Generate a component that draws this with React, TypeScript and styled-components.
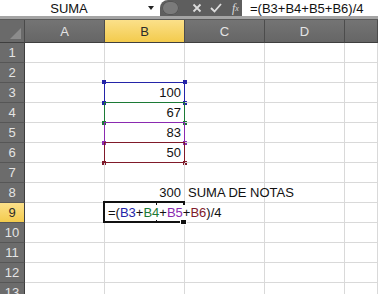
import React from 'react';
import styled, { createGlobalStyle } from 'styled-components';

const GlobalStyle = createGlobalStyle`
  html, body {
    margin: 0;
    padding: 0;
    background: #ffffff;
    overflow: hidden;
  }
  body {
    font-family: 'Liberation Sans', Arial, sans-serif;
  }
`;

const Window = styled.div`
  width: 378px;
  height: 294px;
  overflow: hidden;
  background: #ffffff;
  display: flex;
  flex-direction: column;
  & > * {
    flex-shrink: 0;
  }
`;

const FormulaBar = styled.div`
  height: 16px;
  display: flex;
  align-items: stretch;
  background: #ffffff;
`;

const NameBox = styled.div`
  width: 160px;
  position: relative;
  display: flex;
  align-items: center;
  justify-content: center;
  padding-right: 22px;
  box-sizing: border-box;
  font-size: 13px;
  color: #111;
`;

const DropArrow = styled.span`
  position: absolute;
  right: 6px;
  top: 6px;
  width: 0;
  height: 0;
  border-left: 3px solid transparent;
  border-right: 3px solid transparent;
  border-top: 4px solid #222;
`;

const ButtonStrip = styled.div`
  width: 82px;
  background: #5e5e5e;
  display: flex;
  align-items: center;
  gap: 6px;
  padding-left: 2px;
  box-sizing: border-box;
  border-radius: 8px 0 0 0;
`;

const Grip = styled.div`
  width: 18px;
  height: 14px;
  border-radius: 7px;
  background: #7a7a7a;
  box-shadow: inset 0 0 0 1px #555;
  margin-right: 6px;
`;

const IconSlot = styled.div`
  width: 14px;
  height: 14px;
  display: flex;
  align-items: center;
  justify-content: center;
  color: #dcdcdc;
  font-family: 'Liberation Serif', serif;
  font-style: italic;
  font-size: 12px;
`;

const FormulaInput = styled.div`
  flex: 1;
  display: flex;
  align-items: center;
  padding-left: 8px;
  font-size: 13px;
  color: #111;
  white-space: nowrap;
`;

const Band = styled.div`
  height: 3px;
  background: #a4a4a4;
  border-bottom: 1px solid #5a5a5a;
`;

const Sheet = styled.div`
  display: grid;
  grid-template-columns: 25px repeat(4, 80px) 1fr;
  grid-template-rows: 23px repeat(13, 20px);
  font-size: 13px;
`;

const Corner = styled.div`
  background: #6a6a6a;
  border-right: 1px solid #4a4a4a;
  border-bottom: 1px solid #3e3e3e;
  position: relative;
  box-sizing: border-box;
  &::after {
    content: '';
    position: absolute;
    right: 3px;
    bottom: 3px;
    width: 0;
    height: 0;
    border-left: 11px solid transparent;
    border-bottom: 11px solid #8c8c8c;
  }
`;

const ColHead = styled.div<{ $active?: boolean }>`
  background: ${(p) => (p.$active ? 'linear-gradient(#fbe08a, #f3cb4d)' : 'linear-gradient(#747474, #666666)')};
  color: ${(p) => (p.$active ? '#2b2b2b' : '#e4e4e4')};
  border-right: 1px solid #4c4c4c;
  border-bottom: 1px solid #3e3e3e;
  box-sizing: border-box;
  display: flex;
  align-items: center;
  justify-content: center;
`;

const RowHead = styled.div<{ $active?: boolean }>`
  background: ${(p) => (p.$active ? 'linear-gradient(#fbe08a, #f3cb4d)' : '#6c6c6c')};
  color: ${(p) => (p.$active ? '#2b2b2b' : '#e4e4e4')};
  border-right: 1px solid #3e3e3e;
  border-bottom: 1px solid #565656;
  box-sizing: border-box;
  display: flex;
  align-items: center;
  justify-content: center;
`;

const Cell = styled.div<{ $align?: 'left' | 'right'; $raised?: boolean }>`
  position: relative;
  border-right: 1px solid #d9d9d9;
  border-bottom: 1px solid #d9d9d9;
  box-sizing: border-box;
  display: flex;
  align-items: center;
  justify-content: ${(p) => (p.$align === 'right' ? 'flex-end' : 'flex-start')};
  padding: 0 3px;
  white-space: nowrap;
  overflow: visible;
  color: #111;
  z-index: ${(p) => (p.$raised ? 4 : 1)};
`;

const RefBox = styled.div<{ $color: string }>`
  position: absolute;
  left: -1px;
  top: -1px;
  right: -1px;
  bottom: -1px;
  border: 1px solid ${(p) => p.$color};
  pointer-events: none;
`;

const Handle = styled.span<{ $color: string; $x: 'l' | 'r'; $y: 't' | 'b' }>`
  position: absolute;
  width: 4px;
  height: 4px;
  background: ${(p) => p.$color};
  ${(p) => (p.$x === 'l' ? 'left: -3px;' : 'right: -3px;')}
  ${(p) => (p.$y === 't' ? 'top: -3px;' : 'bottom: -3px;')}
`;

const EditBox = styled.div`
  position: absolute;
  left: -2px;
  top: -2px;
  right: -1px;
  bottom: -1px;
  border: 2px solid #111;
  pointer-events: none;
`;

const Caret = styled.span`
  position: absolute;
  left: 51px;
  top: 0;
  bottom: 0;
  width: 1px;
  background: #111;
`;

const FillHandle = styled.span`
  position: absolute;
  right: -4px;
  bottom: -4px;
  width: 5px;
  height: 5px;
  background: #111;
  border: 1px solid #fff;
`;

const EditText = styled.span`
  position: relative;
  z-index: 3;
  background: #fff;
  padding-right: 2px;
`;

const Ref = styled.span<{ $color: string }>`
  color: ${(p) => p.$color};
`;

const refColors = {
  B3: '#2424a8',
  B4: '#1c7a36',
  B5: '#8a2ab0',
  B6: '#801a2a',
};

const Formula: React.FC = () => (
  <>
    =(<Ref $color={refColors.B3}>B3</Ref>+<Ref $color={refColors.B4}>B4</Ref>+
    <Ref $color={refColors.B5}>B5</Ref>+<Ref $color={refColors.B6}>B6</Ref>)/4
  </>
);

// the lower cell's handles sit on the shared edge, as Excel draws them
const RangeMark: React.FC<{ color: string; first?: boolean }> = ({ color, first }) => (
  <RefBox $color={color}>
    {first && <Handle $color={color} $x="l" $y="t" />}
    {first && <Handle $color={color} $x="r" $y="t" />}
    <Handle $color={color} $x="l" $y="b" />
    <Handle $color={color} $x="r" $y="b" />
  </RefBox>
);

const columns = ['A', 'B', 'C', 'D', ''];

const values: Record<number, string> = { 3: '100', 4: '67', 5: '83', 6: '50' };
const marks: Record<number, string> = {
  3: refColors.B3,
  4: refColors.B4,
  5: refColors.B5,
  6: refColors.B6,
};

const App: React.FC = () => {
  const rows = Array.from({ length: 13 }, (_, i) => i + 1);

  const renderB = (r: number) => {
    if (values[r]) {
      return (
        <Cell key="B" $align="right">
          {values[r]}
          <RangeMark color={marks[r]} first={r === 3} />
        </Cell>
      );
    }
    if (r === 8) {
      return (
        <Cell key="B" $align="right">
          300
        </Cell>
      );
    }
    if (r === 9) {
      return (
        <Cell key="B" $raised>
          <EditText>
            <Formula />
          </EditText>
          <EditBox>
            <Caret />
            <FillHandle />
          </EditBox>
        </Cell>
      );
    }
    return <Cell key="B" />;
  };

  return (
    <Window>
      <GlobalStyle />
      <FormulaBar>
        <NameBox>
          SUMA
          <DropArrow />
        </NameBox>
        <ButtonStrip>
          <Grip />
          <IconSlot>
            <svg width="10" height="10" viewBox="0 0 10 10">
              <path d="M1.5 1.5 L8.5 8.5 M8.5 1.5 L1.5 8.5" stroke="#dcdcdc" strokeWidth="1.8" />
            </svg>
          </IconSlot>
          <IconSlot>
            <svg width="12" height="10" viewBox="0 0 12 10">
              <path d="M1 5 L4.5 8.5 L11 1" stroke="#dcdcdc" strokeWidth="1.8" fill="none" />
            </svg>
          </IconSlot>
          <IconSlot>f<sub style={{ fontSize: 8 }}>x</sub></IconSlot>
        </ButtonStrip>
        <FormulaInput>
          <span>=(B3+B4+B5+B6)/4</span>
        </FormulaInput>
      </FormulaBar>
      <Band />
      <Sheet>
        <Corner />
        {columns.map((c) => (
          <ColHead key={c || 'E'} $active={c === 'B'}>
            {c}
          </ColHead>
        ))}
        {rows.map((r) => (
          <React.Fragment key={r}>
            <RowHead $active={r === 9}>{r}</RowHead>
            <Cell />
            {renderB(r)}
            <Cell>{r === 8 ? 'SUMA DE NOTAS' : ''}</Cell>
            <Cell />
            <Cell />
          </React.Fragment>
        ))}
      </Sheet>
    </Window>
  );
};

export default App;
